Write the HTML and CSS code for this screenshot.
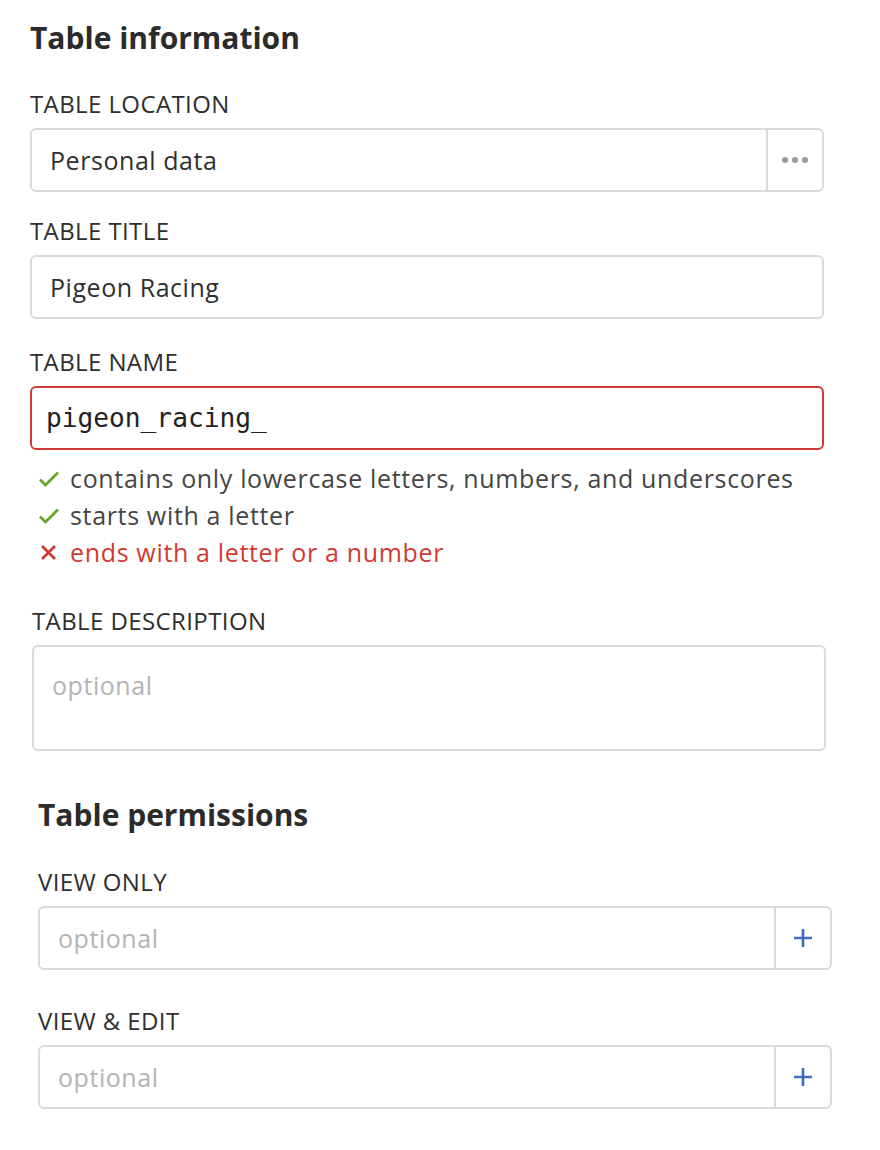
FILE: index.html
```html
<!DOCTYPE html>
<html>
<head>
<meta charset="utf-8">
<link rel="stylesheet" href="styles.css">
</head>
<body>
<div class="page">
  <section class="info">
    <h2 class="heading">Table information</h2>

    <div class="field loc">
      <label class="label">TABLE LOCATION</label>
      <div class="box with-btn">
        <div class="value">Personal data</div>
        <div class="side-btn">
          <svg width="28" height="8" viewBox="0 0 28 8"><circle cx="4" cy="4" r="3" fill="#9a9a9a"/><circle cx="14" cy="4" r="3" fill="#9a9a9a"/><circle cx="24" cy="4" r="3" fill="#9a9a9a"/></svg>
        </div>
      </div>
    </div>

    <div class="field title">
      <label class="label">TABLE TITLE</label>
      <div class="box"><div class="value">Pigeon Racing</div></div>
    </div>

    <div class="field name">
      <label class="label">TABLE NAME</label>
      <div class="box error"><div class="value mono">pigeon_racing_</div></div>
      <ul class="rules">
        <li class="rule ok"><svg class="ico" width="22" height="18" viewBox="0 0 22 18"><path d="M2 9.5 L7.5 15 L20 2.5" fill="none" stroke="#6aa532" stroke-width="2.8"/></svg>contains only lowercase letters, numbers, and underscores</li>
        <li class="rule ok"><svg class="ico" width="22" height="18" viewBox="0 0 22 18"><path d="M2 9.5 L7.5 15 L20 2.5" fill="none" stroke="#6aa532" stroke-width="2.8"/></svg>starts with a letter</li>
        <li class="rule bad"><svg class="ico" width="22" height="18" viewBox="0 0 22 18"><path d="M4 2 L17 15 M17 2 L4 15" fill="none" stroke="#cf3a31" stroke-width="2.8"/></svg>ends with a letter or a number</li>
      </ul>
    </div>

    <div class="field desc">
      <label class="label">TABLE DESCRIPTION</label>
      <div class="box area"><div class="value placeholder">optional</div></div>
    </div>
  </section>

  <section class="perms">
    <h2 class="heading">Table permissions</h2>

    <div class="field">
      <label class="label">VIEW ONLY</label>
      <div class="box with-btn">
        <div class="value placeholder">optional</div>
        <div class="side-btn">
          <svg width="20" height="20" viewBox="0 0 20 20"><path d="M10 1 V19 M1 10 H19" stroke="#3d6cc0" stroke-width="2.6" fill="none"/></svg>
        </div>
      </div>
    </div>

    <div class="field">
      <label class="label">VIEW &amp; EDIT</label>
      <div class="box with-btn">
        <div class="value placeholder">optional</div>
        <div class="side-btn">
          <svg width="20" height="20" viewBox="0 0 20 20"><path d="M10 1 V19 M1 10 H19" stroke="#3d6cc0" stroke-width="2.6" fill="none"/></svg>
        </div>
      </div>
    </div>
  </section>
</div>
</body>
</html>
```

FILE: styles.css
```css
* { box-sizing: border-box; }

html, body {
  margin: 0;
  padding: 0;
  background: #ffffff;
}

body {
  font-family: "Open Sans", "Noto Sans", sans-serif;
  color: #333333;
}

.page {
  width: 880px;
  padding: 18px 56px 0 30px;
}

.heading {
  margin: 0;
  font-size: 30px;
  line-height: 40px;
  font-weight: 700;
  color: #2b2b2b;
}

.info .heading {
  margin-bottom: 30px;
}

.field {
  display: flex;
  flex-direction: column;
  margin-bottom: 25px;
}

.field.loc {
  margin-bottom: 23px;
}

.field.title {
  margin-bottom: 27px;
}

.label {
  display: block;
  font-size: 24px;
  letter-spacing: 0.4px;
  line-height: 32px;
  color: #2e2e2e;
  margin-bottom: 8px;
}

.box {
  display: flex;
  align-items: stretch;
  height: 64px;
  border: 2px solid #dadada;
  border-radius: 6px;
  background: #fff;
}

.box.error {
  border-color: #d13b33;
}

.value {
  flex: 1;
  display: flex;
  align-items: center;
  padding: 0 18px;
  font-size: 25px;
  letter-spacing: 0.55px;
  color: #2f2f2f;
}

.value.mono {
  font-family: "DejaVu Sans Mono", "Liberation Mono", monospace;
  font-size: 26.2px;
  letter-spacing: 0;
  padding-left: 14px;
  color: #222;
}

.value.placeholder {
  color: #b3b3b3;
}

.side-btn {
  width: 56px;
  border-left: 2px solid #dadada;
  display: flex;
  align-items: center;
  justify-content: center;
}

.field.name {
  margin-bottom: 34px;
}

.rules {
  list-style: none;
  margin: 10px 0 0 0;
  padding: 0 0 0 8px;
}

.rule {
  display: flex;
  align-items: center;
  font-size: 25px;
  letter-spacing: 0.66px;
  line-height: 37px;
  color: #454545;
}

.rule.bad {
  color: #cf3a31;
}

.ico {
  margin-right: 10px;
  flex: none;
}

.desc {
  margin-left: 2px;
  margin-right: -2px;
  margin-bottom: 44px;
}

.box.area {
  height: 106px;
  align-items: flex-start;
}

.box.area .value {
  height: 76px;
}

.perms {
  margin-left: 8px;
  margin-right: -8px;
}

.perms .heading {
  margin-bottom: 31px;
}

.perms .field {
  margin-bottom: 35px;
}
```
